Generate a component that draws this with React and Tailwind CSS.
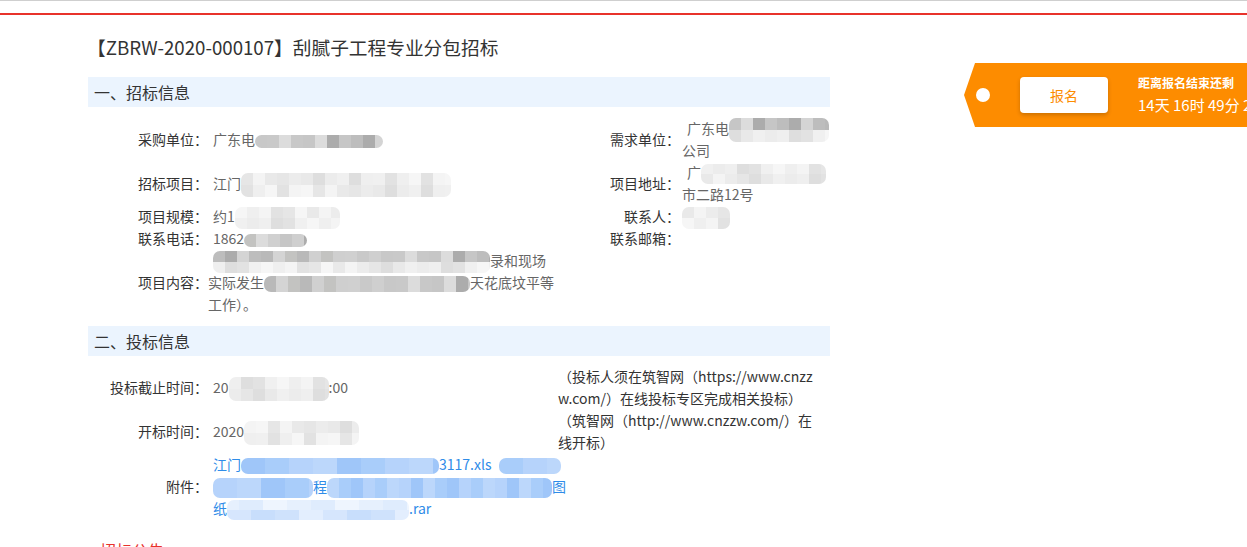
import React from "react";

const PAL = {
  gray: ["#cfcfcf", "#c6c6c6", "#b9b9b9", "#c9c9c9", "#acacac", "#c3c3c1", "#c8c8c8", "#bdbdbd", "#d0d0d0", "#dcdcdc", "#d4d4d4"],
  light: ["#e6e6e6", "#ececec", "#f0f0f0", "#e2e2e2", "#f4f4f4", "#e9e9e9", "#dedede", "#efefef", "#f6f6f6"],
  blue: ["#b6d3fb", "#c8defc", "#a9cdfa", "#d6e6fd", "#9fc6f9", "#e3eefe", "#bcd7fb", "#cfe2fc"],
  pale: ["#eef5fe", "#f3f8ff", "#e6f0fd", "#f7faff", "#dfecfd", "#f0f6fe"],
};

function Blur({ w, h, tones = ["gray"], seed = 0 }) {
  const cw = 12;
  const cols = Math.ceil(w / cw);
  const rows = tones.length;
  const cells = [];
  for (let r = 0; r < rows; r++) {
    const pal = PAL[tones[r]];
    for (let c = 0; c < cols; c++) {
      const i = (c * 7 + r * 3 + seed * 5 + ((c * c + seed) % 4)) % pal.length;
      cells.push(
        <span
          key={r + "-" + c}
          className="block shrink-0"
          style={{ width: cw, height: h / rows, background: pal[i] }}
        />
      );
    }
  }
  const m = -Math.max(0, h - 14) / 2;
  return (
    <span
      className="inline-block align-middle overflow-hidden rounded-[7px] blur-[0.7px]"
      style={{ width: w, height: h, marginTop: m, marginBottom: m }}
    >
      <span className="flex flex-wrap" style={{ width: cols * cw }}>
        {cells}
      </span>
    </span>
  );
}

const Label = ({ children, className = "" }) => (
  <div className={"text-right text-[#333] " + className}>{children}</div>
);

export default function App() {
  return (
    <div
      className="relative w-[1247px] h-[547px] overflow-hidden bg-white text-[14px] leading-[22px]"
      style={{ fontFamily: '"Noto Sans CJK SC", "Noto Sans", sans-serif' }}
    >
      <div className="h-px bg-[#cfcfcf]" />
      <div className="mt-[12px] h-[2px] bg-[#e8322b]" />

      <div className="ml-[77px] w-[753px]">
        <h1 className="mt-[20px] ml-[10px] text-[18.7px] leading-[24px] text-[#333] font-normal whitespace-nowrap">
          【ZBRW-2020-000107】刮腻子工程专业分包招标
        </h1>

        <div className="mt-[18px] ml-[11px] h-[30px] bg-[#ebf4fe] pl-[6px] text-[16px] leading-[30px] text-[#333]">
          一、招标信息
        </div>

        <div className="mt-[10px] grid grid-cols-[131px_352px_120px_150px] items-center">
          <Label>采购单位：</Label>
          <div className="pl-[5px] text-[#666] whitespace-nowrap">
            广东电<Blur w={128} h={13} tones={["gray"]} seed={1} />
          </div>
          <Label>需求单位：</Label>
          <div className="pl-[2px] text-[#666]">
            <div className="pl-[5px] whitespace-nowrap">
              广东电<Blur w={100} h={24} tones={["gray", "light"]} seed={2} />
            </div>
            <div>公司</div>
          </div>

          <Label>招标项目：</Label>
          <div className="pl-[5px] text-[#666] whitespace-nowrap">
            江门<Blur w={210} h={24} tones={["light", "light"]} seed={3} />
          </div>
          <Label>项目地址：</Label>
          <div className="pl-[2px] text-[#666]">
            <div className="pl-[5px] whitespace-nowrap">
              广<Blur w={125} h={20} tones={["light", "light"]} seed={4} />
            </div>
            <div>市二路12号</div>
          </div>

          <Label>项目规模：</Label>
          <div className="pl-[5px] text-[#666] whitespace-nowrap">
            约1<Blur w={105} h={22} tones={["light", "light"]} seed={5} />
          </div>
          <Label>联系人：</Label>
          <div className="pl-[2px] text-[#666]">
            <Blur w={48} h={22} tones={["light", "light"]} seed={6} />
          </div>

          <Label>联系电话：</Label>
          <div className="pl-[5px] text-[#666] whitespace-nowrap">
            1862<Blur w={63} h={13} tones={["gray"]} seed={7} />
          </div>
          <Label>联系邮箱：</Label>
          <div className="pl-[2px] text-[#666]" />

          <Label>项目内容：</Label>
          <div className="text-[#666]">
            <div className="pl-[5px] whitespace-nowrap">
              <Blur w={277} h={22} tones={["gray", "light"]} seed={8} />录和现场
            </div>
            <div className="whitespace-nowrap">
              实际发生<Blur w={206} h={16} tones={["gray"]} seed={9} />天花底坟平等
            </div>
            <div>工作）。</div>
          </div>
          <div />
          <div />
        </div>

        <div className="mt-[11px] ml-[11px] h-[30px] bg-[#ebf4fe] pl-[6px] text-[16px] leading-[30px] text-[#333]">
          二、投标信息
        </div>

        <div className="mt-[9px] grid grid-cols-[131px_350px_272px] grid-rows-[44px_44px_66px] items-center">
          <Label>投标截止时间：</Label>
          <div className="pl-[5px] text-[#666] whitespace-nowrap">
            20<Blur w={100} h={24} tones={["light", "light"]} seed={10} />:00
          </div>
          <div className="row-span-2 text-[#333] whitespace-nowrap">
            <div>（投标人须在筑智网（https://www.cnzz</div>
            <div>w.com/）在线投标专区完成相关投标）</div>
            <div>（筑智网（http://www.cnzzw.com/）在</div>
            <div>线开标）</div>
          </div>

          <Label>开标时间：</Label>
          <div className="pl-[5px] text-[#666] whitespace-nowrap">
            2020<Blur w={115} h={24} tones={["light", "light"]} seed={11} />
          </div>

          <Label>附件：</Label>
          <div className="pl-[5px] text-[#2f8ce8] whitespace-nowrap">
            <div>
              江门<Blur w={198} h={16} tones={["blue"]} seed={12} />3117.xls
              <span className="ml-[8px]">
                <Blur w={62} h={16} tones={["blue"]} seed={13} />
              </span>
            </div>
            <div>
              <Blur w={100} h={20} tones={["blue"]} seed={14} />程
              <Blur w={225} h={20} tones={["blue"]} seed={15} />图
            </div>
            <div>
              纸<Blur w={182} h={20} tones={["pale", "blue"]} seed={16} />.rar
            </div>
          </div>
          <div />
        </div>

        <div className="mt-[20px] pl-[23px] text-[16px] leading-[22px] text-[#e8322b]">
          招标公告
        </div>
      </div>

      {/* Orange registration tag */}
      <div
        className="absolute left-[964px] top-[63px] h-[64px] w-[300px] bg-[#fd8c00]"
        style={{ clipPath: "polygon(11px 0, 100% 0, 100% 100%, 11px 100%, 0 50%)" }}
      >
        <div className="flex h-full items-center">
          <div className="ml-[12px] h-[14px] w-[14px] shrink-0 rounded-full bg-white" />
          <button className="ml-[30px] h-[36px] w-[88px] shrink-0 rounded-[4px] bg-white text-[14px] text-[#fd8c00] shadow-[0_2px_4px_rgba(0,0,0,0.2)]">
            报名
          </button>
          <div className="ml-[30px] shrink-0 text-white whitespace-nowrap">
            <div className="text-[12px] leading-[16px] font-bold">距离报名结束还剩</div>
            <div className="mt-[4px] text-[15px] leading-[20px]">14天 16时 49分 25秒</div>
          </div>
        </div>
      </div>
    </div>
  );
}
